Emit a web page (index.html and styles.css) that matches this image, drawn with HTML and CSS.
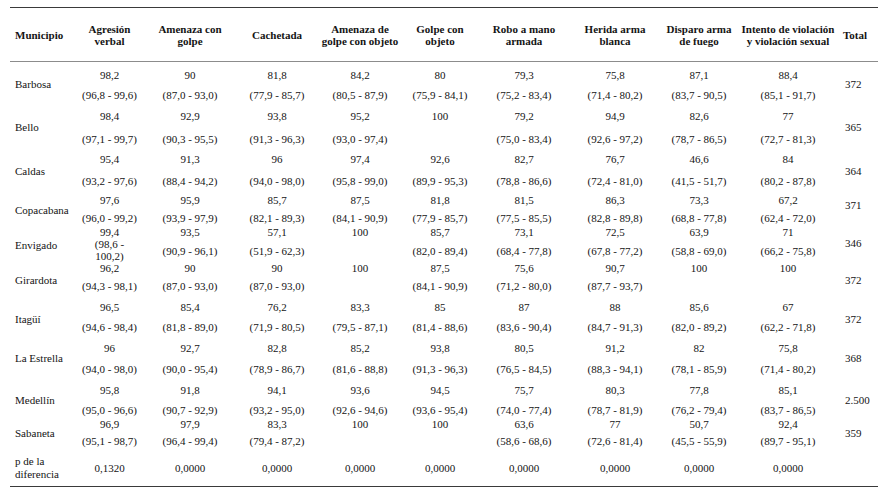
FILE: index.html
```html
<!DOCTYPE html>
<html lang="es">
<head>
<meta charset="utf-8">
<title>Tabla</title>
<link rel="stylesheet" href="styles.css">
</head>
<body>
<div class="tbl">
  <div class="row head">
    <div class="h lab">Municipio</div>
    <div class="h">Agresión<br>verbal</div>
    <div class="h">Amenaza con<br>golpe</div>
    <div class="h">Cachetada</div>
    <div class="h">Amenaza de<br>golpe con objeto</div>
    <div class="h">Golpe con<br>objeto</div>
    <div class="h">Robo a mano<br>armada</div>
    <div class="h">Herida arma<br>blanca</div>
    <div class="h">Disparo arma<br>de fuego</div>
    <div class="h">Intento de violación<br>y violación sexual</div>
    <div class="h tot">Total</div>
  </div>

  <div class="row r1">
    <div class="lab">Barbosa</div>
    <div class="c"><div class="v">98,2</div><div class="ci">(96,8 - 99,6)</div></div>
    <div class="c"><div class="v">90</div><div class="ci">(87,0 - 93,0)</div></div>
    <div class="c"><div class="v">81,8</div><div class="ci">(77,9 - 85,7)</div></div>
    <div class="c"><div class="v">84,2</div><div class="ci">(80,5 - 87,9)</div></div>
    <div class="c"><div class="v">80</div><div class="ci">(75,9 - 84,1)</div></div>
    <div class="c"><div class="v">79,3</div><div class="ci">(75,2 - 83,4)</div></div>
    <div class="c"><div class="v">75,8</div><div class="ci">(71,4 - 80,2)</div></div>
    <div class="c"><div class="v">87,1</div><div class="ci">(83,7 - 90,5)</div></div>
    <div class="c"><div class="v">88,4</div><div class="ci">(85,1 - 91,7)</div></div>
    <div class="lab tot">372</div>
  </div>

  <div class="row r2">
    <div class="lab">Bello</div>
    <div class="c"><div class="v">98,4</div><div class="ci">(97,1 - 99,7)</div></div>
    <div class="c"><div class="v">92,9</div><div class="ci">(90,3 - 95,5)</div></div>
    <div class="c"><div class="v">93,8</div><div class="ci">(91,3 - 96,3)</div></div>
    <div class="c"><div class="v">95,2</div><div class="ci">(93,0 - 97,4)</div></div>
    <div class="c"><div class="v">100</div></div>
    <div class="c"><div class="v">79,2</div><div class="ci">(75,0 - 83,4)</div></div>
    <div class="c"><div class="v">94,9</div><div class="ci">(92,6 - 97,2)</div></div>
    <div class="c"><div class="v">82,6</div><div class="ci">(78,7 - 86,5)</div></div>
    <div class="c"><div class="v">77</div><div class="ci">(72,7 - 81,3)</div></div>
    <div class="lab tot">365</div>
  </div>

  <div class="row r3">
    <div class="lab">Caldas</div>
    <div class="c"><div class="v">95,4</div><div class="ci">(93,2 - 97,6)</div></div>
    <div class="c"><div class="v">91,3</div><div class="ci">(88,4 - 94,2)</div></div>
    <div class="c"><div class="v">96</div><div class="ci">(94,0 - 98,0)</div></div>
    <div class="c"><div class="v">97,4</div><div class="ci">(95,8 - 99,0)</div></div>
    <div class="c"><div class="v">92,6</div><div class="ci">(89,9 - 95,3)</div></div>
    <div class="c"><div class="v">82,7</div><div class="ci">(78,8 - 86,6)</div></div>
    <div class="c"><div class="v">76,7</div><div class="ci">(72,4 - 81,0)</div></div>
    <div class="c"><div class="v">46,6</div><div class="ci">(41,5 - 51,7)</div></div>
    <div class="c"><div class="v">84</div><div class="ci">(80,2 - 87,8)</div></div>
    <div class="lab tot">364</div>
  </div>

  <div class="row r4">
    <div class="lab">Copacabana</div>
    <div class="c"><div class="v">97,6</div><div class="ci">(96,0 - 99,2)</div></div>
    <div class="c"><div class="v">95,9</div><div class="ci">(93,9 - 97,9)</div></div>
    <div class="c"><div class="v">85,7</div><div class="ci">(82,1 - 89,3)</div></div>
    <div class="c"><div class="v">87,5</div><div class="ci">(84,1 - 90,9)</div></div>
    <div class="c"><div class="v">81,8</div><div class="ci">(77,9 - 85,7)</div></div>
    <div class="c"><div class="v">81,5</div><div class="ci">(77,5 - 85,5)</div></div>
    <div class="c"><div class="v">86,3</div><div class="ci">(82,8 - 89,8)</div></div>
    <div class="c"><div class="v">73,3</div><div class="ci">(68,8 - 77,8)</div></div>
    <div class="c"><div class="v">67,2</div><div class="ci">(62,4 - 72,0)</div></div>
    <div class="lab tot">371</div>
  </div>

  <div class="row r5">
    <div class="lab">Envigado</div>
    <div class="c"><div class="v">99,4</div><div class="ci wrap">(98,6 -<br>100,2)</div></div>
    <div class="c"><div class="v">93,5</div><div class="ci">(90,9 - 96,1)</div></div>
    <div class="c"><div class="v">57,1</div><div class="ci">(51,9 - 62,3)</div></div>
    <div class="c"><div class="v">100</div></div>
    <div class="c"><div class="v">85,7</div><div class="ci">(82,0 - 89,4)</div></div>
    <div class="c"><div class="v">73,1</div><div class="ci">(68,4 - 77,8)</div></div>
    <div class="c"><div class="v">72,5</div><div class="ci">(67,8 - 77,2)</div></div>
    <div class="c"><div class="v">63,9</div><div class="ci">(58,8 - 69,0)</div></div>
    <div class="c"><div class="v">71</div><div class="ci">(66,2 - 75,8)</div></div>
    <div class="lab tot">346</div>
  </div>

  <div class="row r6">
    <div class="lab">Girardota</div>
    <div class="c"><div class="v">96,2</div><div class="ci">(94,3 - 98,1)</div></div>
    <div class="c"><div class="v">90</div><div class="ci">(87,0 - 93,0)</div></div>
    <div class="c"><div class="v">90</div><div class="ci">(87,0 - 93,0)</div></div>
    <div class="c"><div class="v">100</div></div>
    <div class="c"><div class="v">87,5</div><div class="ci">(84,1 - 90,9)</div></div>
    <div class="c"><div class="v">75,6</div><div class="ci">(71,2 - 80,0)</div></div>
    <div class="c"><div class="v">90,7</div><div class="ci">(87,7 - 93,7)</div></div>
    <div class="c"><div class="v">100</div></div>
    <div class="c"><div class="v">100</div></div>
    <div class="lab tot">372</div>
  </div>

  <div class="row r7">
    <div class="lab">Itagüí</div>
    <div class="c"><div class="v">96,5</div><div class="ci">(94,6 - 98,4)</div></div>
    <div class="c"><div class="v">85,4</div><div class="ci">(81,8 - 89,0)</div></div>
    <div class="c"><div class="v">76,2</div><div class="ci">(71,9 - 80,5)</div></div>
    <div class="c"><div class="v">83,3</div><div class="ci">(79,5 - 87,1)</div></div>
    <div class="c"><div class="v">85</div><div class="ci">(81,4 - 88,6)</div></div>
    <div class="c"><div class="v">87</div><div class="ci">(83,6 - 90,4)</div></div>
    <div class="c"><div class="v">88</div><div class="ci">(84,7 - 91,3)</div></div>
    <div class="c"><div class="v">85,6</div><div class="ci">(82,0 - 89,2)</div></div>
    <div class="c"><div class="v">67</div><div class="ci">(62,2 - 71,8)</div></div>
    <div class="lab tot">372</div>
  </div>

  <div class="row r8">
    <div class="lab">La Estrella</div>
    <div class="c"><div class="v">96</div><div class="ci">(94,0 - 98,0)</div></div>
    <div class="c"><div class="v">92,7</div><div class="ci">(90,0 - 95,4)</div></div>
    <div class="c"><div class="v">82,8</div><div class="ci">(78,9 - 86,7)</div></div>
    <div class="c"><div class="v">85,2</div><div class="ci">(81,6 - 88,8)</div></div>
    <div class="c"><div class="v">93,8</div><div class="ci">(91,3 - 96,3)</div></div>
    <div class="c"><div class="v">80,5</div><div class="ci">(76,5 - 84,5)</div></div>
    <div class="c"><div class="v">91,2</div><div class="ci">(88,3 - 94,1)</div></div>
    <div class="c"><div class="v">82</div><div class="ci">(78,1 - 85,9)</div></div>
    <div class="c"><div class="v">75,8</div><div class="ci">(71,4 - 80,2)</div></div>
    <div class="lab tot">368</div>
  </div>

  <div class="row r9">
    <div class="lab">Medellín</div>
    <div class="c"><div class="v">95,8</div><div class="ci">(95,0 - 96,6)</div></div>
    <div class="c"><div class="v">91,8</div><div class="ci">(90,7 - 92,9)</div></div>
    <div class="c"><div class="v">94,1</div><div class="ci">(93,2 - 95,0)</div></div>
    <div class="c"><div class="v">93,6</div><div class="ci">(92,6 - 94,6)</div></div>
    <div class="c"><div class="v">94,5</div><div class="ci">(93,6 - 95,4)</div></div>
    <div class="c"><div class="v">75,7</div><div class="ci">(74,0 - 77,4)</div></div>
    <div class="c"><div class="v">80,3</div><div class="ci">(78,7 - 81,9)</div></div>
    <div class="c"><div class="v">77,8</div><div class="ci">(76,2 - 79,4)</div></div>
    <div class="c"><div class="v">85,1</div><div class="ci">(83,7 - 86,5)</div></div>
    <div class="lab tot">2.500</div>
  </div>

  <div class="row r10">
    <div class="lab">Sabaneta</div>
    <div class="c"><div class="v">96,9</div><div class="ci">(95,1 - 98,7)</div></div>
    <div class="c"><div class="v">97,9</div><div class="ci">(96,4 - 99,4)</div></div>
    <div class="c"><div class="v">83,3</div><div class="ci">(79,4 - 87,2)</div></div>
    <div class="c"><div class="v">100</div></div>
    <div class="c"><div class="v">100</div></div>
    <div class="c"><div class="v">63,6</div><div class="ci">(58,6 - 68,6)</div></div>
    <div class="c"><div class="v">77</div><div class="ci">(72,6 - 81,4)</div></div>
    <div class="c"><div class="v">50,7</div><div class="ci">(45,5 - 55,9)</div></div>
    <div class="c"><div class="v">92,4</div><div class="ci">(89,7 - 95,1)</div></div>
    <div class="lab tot">359</div>
  </div>

  <div class="row pr">
    <div class="plab">p de la<br>diferencia</div>
    <div class="pv">0,1320</div>
    <div class="pv">0,0000</div>
    <div class="pv">0,0000</div>
    <div class="pv">0,0000</div>
    <div class="pv">0,0000</div>
    <div class="pv">0,0000</div>
    <div class="pv">0,0000</div>
    <div class="pv">0,0000</div>
    <div class="pv">0,0000</div>
    <div class="pv"></div>
  </div>
</div>
</body>
</html>
```

FILE: styles.css
```css
html, body {
  background: #ffffff;
}
body {
  margin: 7px 0 0 10px;
  font-family: "Liberation Serif", "Times New Roman", Tinos, "DejaVu Serif", serif;
  font-size: 11px;
  line-height: 12px;
  color: #141414;
}
.tbl {
  width: 868px;
  border-top: 1px solid #3a3a3a;
  border-bottom: 1px solid #3a3a3a;
}
.row {
  display: grid;
  grid-template-columns: 65px 69px 92px 82px 84px 76px 92px 90px 78px 100px 40px;
  box-sizing: border-box;
}
.head {
  height: 54px;
  border-bottom: 1px solid #8c8c8c;
  align-items: center;
}
.h {
  font-weight: bold;
  text-align: center;
  white-space: nowrap;
}
.h.lab {
  text-align: left;
  padding: 0 0 0 5px;
}
.h.tot {
  text-align: left;
  padding-left: 5px;
}
.lab {
  padding: var(--l) 0 0 5px;
  white-space: nowrap;
}
.lab.tot {
  padding-left: 7px;
}
.c {
  text-align: center;
  padding-top: var(--t);
  white-space: nowrap;
}
.ci {
  margin-top: calc(var(--g) - 12px);
}
.ci.wrap {
  margin-top: 0;
}
.r1 { height: 43px; --t: 7px; --g: 20px; --l: 16px; }
.r2 { height: 44px; --t: 5px; --g: 23px; --l: 16px; }
.r3 { height: 41px; --t: 4px; --g: 22px; --l: 16px; }
.r4 { height: 36px; --t: 4px; --g: 18px; --l: 14px; }
.r4 .tot { padding-top: 9px; }
.r5 { height: 36px; --t: 0px; --g: 19px; --l: 13px; }
.r5 .tot { padding-top: 11px; }
.r6 { height: 35px; --t: 0px; --g: 18px; --l: 12px; }
.r7 { height: 41px; --t: 4px; --g: 20px; --l: 16px; }
.r8 { height: 42px; --t: 4px; --g: 21px; --l: 14px; }
.r9 { height: 37px; --t: 4px; --g: 20px; --l: 14px; }
.r10 { height: 33px; --t: 1px; --g: 17px; --l: 10px; }
.pr {
  height: 36px;
  align-items: center;
}
.plab {
  padding-left: 5px;
  line-height: 13px;
  white-space: nowrap;
}
.pv {
  text-align: center;
}
```
